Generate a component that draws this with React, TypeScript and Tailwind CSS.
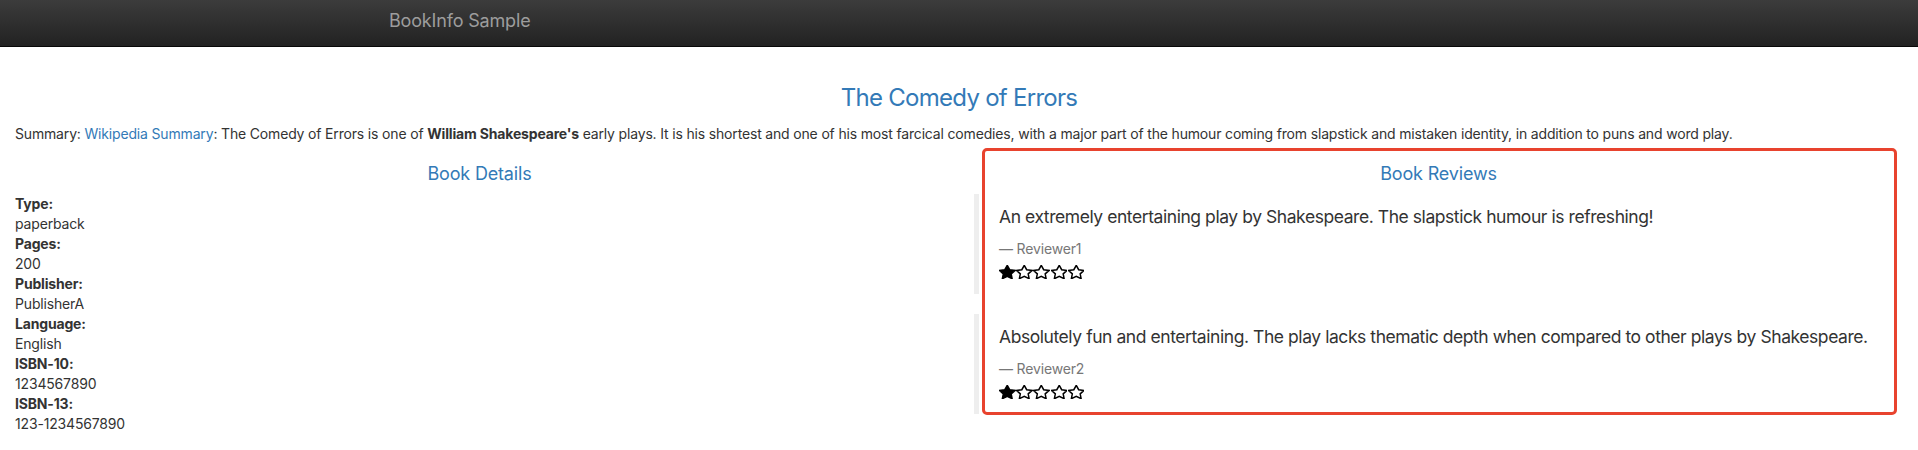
import React from "react";

type Review = { text: string; reviewer: string; stars: number };

const reviews: Review[] = [
  {
    text: "An extremely entertaining play by Shakespeare. The slapstick humour is refreshing!",
    reviewer: "Reviewer1",
    stars: 1,
  },
  {
    text: "Absolutely fun and entertaining. The play lacks thematic depth when compared to other plays by Shakespeare.",
    reviewer: "Reviewer2",
    stars: 1,
  },
];

const details: [string, string][] = [
  ["Type:", "paperback"],
  ["Pages:", "200"],
  ["Publisher:", "PublisherA"],
  ["Language:", "English"],
  ["ISBN-10:", "1234567890"],
  ["ISBN-13:", "123-1234567890"],
];

function Star({ filled }: { filled: boolean }) {
  return (
    <svg
      width="16.5"
      height="14"
      viewBox="1.5 1.5 21 20"
      preserveAspectRatio="none"
      className="mr-[0.7px]"
    >
      <polygon
        points="12,2 15.09,8.26 22,9.27 17,14.14 18.18,21.02 12,17.77 5.82,21.02 7,14.14 2,9.27 8.91,8.26"
        fill={filled ? "#000" : "none"}
        stroke="#000"
        strokeWidth="1.5"
        vectorEffect="non-scaling-stroke"
      />
    </svg>
  );
}

export default function App() {
  return (
    <div className="min-h-screen bg-white text-[14px] leading-[20px] tracking-[-0.012em] text-[#333] font-['Inter','Liberation_Sans',sans-serif]">
      <nav className="h-[47px] border-b border-[#080808] bg-gradient-to-b from-[#3c3c3c] to-[#222]">
        <div className="mx-auto w-[1170px] px-[15px] pt-[11px]">
          <span className="text-[18px] leading-[20px] text-[#9d9d9d]">BookInfo Sample</span>
        </div>
      </nav>

      <div className="px-[15px]">
        <h3 className="mt-[38px] text-center text-[24px] leading-[26px] tracking-[-0.03em] text-[#337ab7]">
          The Comedy of Errors
        </h3>
        <p className="mt-[13px] mb-[10px]">
          Summary: <a className="text-[#337ab7]">Wikipedia Summary</a>: The Comedy of Errors is one of{" "}
          <b className="font-bold">William Shakespeare's</b> early plays. It is his shortest and one of his most
          farcical comedies, with a major part of the humour coming from slapstick and mistaken identity, in
          addition to puns and word play.
        </p>

        <div className="-mx-[15px] grid grid-cols-2 items-start">
          <div className="px-[15px]">
            <h4 className="mt-[10px] mb-[10px] text-center text-[18px] leading-[20px] text-[#337ab7]">
              Book Details
            </h4>
            <dl>
              {details.map(([k, v]) => (
                <React.Fragment key={k}>
                  <dt className="font-bold">{k}</dt>
                  <dd>{v}</dd>
                </React.Fragment>
              ))}
            </dl>
          </div>

          <div className="relative px-[15px]">
            <h4 className="mt-[10px] mb-[10px] text-center text-[18px] leading-[20px] text-[#337ab7]">
              Book Reviews
            </h4>
            {reviews.map((r) => (
              <blockquote
                key={r.reviewer}
                className="mb-[20px] border-l-[5px] border-[#eee] px-[20px] py-[10px] text-[17.5px] leading-[25px] tracking-[-0.025em]"
              >
                <p className="mb-[10px] whitespace-nowrap">{r.text}</p>
                <small className="block text-[14px] leading-[20px] tracking-[-0.012em] text-[#777]">— {r.reviewer}</small>
                <div className="flex h-[25px] items-center">
                  {[0, 1, 2, 3, 4].map((i) => (
                    <Star key={i} filled={i < r.stars} />
                  ))}
                </div>
              </blockquote>
            ))}
            {/* highlight box drawn over the reviews column */}
            <div className="pointer-events-none absolute top-[-6px] left-[23px] right-[21px] bottom-[19px] rounded-[5px] border-[3px] border-[#e8432e]" />
          </div>
        </div>
      </div>
    </div>
  );
}
